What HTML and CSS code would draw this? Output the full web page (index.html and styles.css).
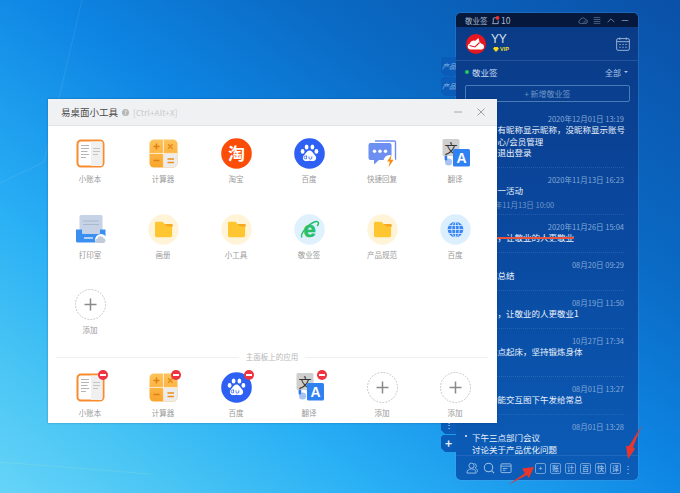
FILE: index.html
```html
<!DOCTYPE html>
<html lang="zh-CN">
<head>
<meta charset="utf-8">
<title>易桌面小工具</title>
<link rel="stylesheet" href="styles.css">
</head>
<body>
<svg class="defs" width="0" height="0" aria-hidden="true">
  <defs>
    <linearGradient id="calcGrad" x1="0" y1="0" x2="0" y2="1"><stop offset="0" stop-color="#fdc35a"/><stop offset="1" stop-color="#f9a52c"/></linearGradient>
    <symbol id="i-book" viewBox="0 0 31 31">
      <rect x="2.500" y="2.500" width="26" height="26" rx="3.500" fill="#fff" stroke="#f78b2d" stroke-width="2"/>
      <path d="M16 3.500h11a.8.8 0 0 1 .5.5v22.500a1.500 1.500 0 0 1-1.500 1.500H16z" fill="#f0f0f0"/>
      <path d="M6 7.500h8M6 10.500h8M6 13.500h6.500M6 16.500h8M6 19.500h5" stroke="#b5b5b5" stroke-width="1"/>
      <path d="M18 10.500h7M18 13.500h7M18 16.500h5" stroke="#c4c4c4" stroke-width="1"/>
    </symbol>
    <symbol id="i-calc" viewBox="0 0 31 31">
      <rect x="1.500" y="1.500" width="28" height="28" rx="4.500" fill="url(#calcGrad)"/>
      <path d="M15.900 15.900h13.600v9.100a4.500 4.500 0 0 1-4.500 4.500h-9.100z" fill="#ececec"/>
      <path d="M15.400 1.500v28M1.500 15.400h28" stroke="#fff" stroke-opacity=".75" stroke-width="1"/>
      <path d="M5.500 8.500h6M8.500 5.500v6M5.500 22.500h6" stroke="#e07f14" stroke-width="1.500"/>
      <path d="M20 6.200l4.600 4.600M24.600 6.200L20 10.800" stroke="#e58a1e" stroke-width="1.400"/>
      <path d="M19.500 21h6.500M19.500 24.500h6.500" stroke="#ec8f1c" stroke-width="1.500"/>
    </symbol>
    <symbol id="i-taobao" viewBox="0 0 31 31">
      <circle cx="15.500" cy="15.500" r="15.300" fill="#fb4d08"/>
      <text x="15.500" y="21.500" class="glyph-tao">淘</text>
    </symbol>
    <symbol id="i-baidu" viewBox="0 0 31 31">
      <circle cx="15.500" cy="15.500" r="15.300" fill="#2d60f3"/>
      <ellipse cx="12.600" cy="9" rx="1.900" ry="2.500" fill="#fff"/>
      <ellipse cx="18.400" cy="9" rx="1.900" ry="2.500" fill="#fff"/>
      <ellipse cx="8.600" cy="13.400" rx="1.900" ry="2.400" fill="#fff"/>
      <ellipse cx="22.400" cy="13.400" rx="1.900" ry="2.400" fill="#fff"/>
      <path d="M15.500 12.600c2.200 0 3 2 4.600 3.600 1.700 1.700 2.300 2.800 2 4.400-.4 2-2.200 2.700-3.800 2.500-1-.1-1.900-.4-2.800-.4s-1.800.3-2.800.4c-1.600.2-3.400-.5-3.800-2.500-.3-1.600.3-2.700 2-4.400 1.600-1.600 2.400-3.600 4.600-3.600z" fill="#fff"/>
      <path d="M12.600 17.600v3.200h-1.100a1.400 1.400 0 1 1 0-2.800h1.100M15 18.400v1.600a1.100 1.100 0 0 0 1.100 1.100h.6a1.100 1.100 0 0 0 1.100-1.100v-1.600" fill="none" stroke="#2d60f3" stroke-width=".8"/>
    </symbol>
    <symbol id="i-reply" viewBox="0 0 31 31">
      <path d="M8 3h19.500a1 1 0 0 1 1 1v18" fill="none" stroke="#6c8ff2" stroke-width="1.400"/>
      <path d="M3.500 5h19a2 2 0 0 1 2 2v13a2 2 0 0 1-2 2H12l-5 4.600V22H3.500a2 2 0 0 1-2-2V7a2 2 0 0 1 2-2z" fill="#6d8ff1"/>
      <circle cx="7.500" cy="13.300" r="1.700" fill="#fff"/><circle cx="13" cy="13.300" r="1.700" fill="#fff"/><circle cx="18.500" cy="13.300" r="1.700" fill="#fff"/>
      <circle cx="22.500" cy="23" r="6" fill="#fff"/>
      <path d="M24.500 17l-4.500 6.600h2.800l-1.200 5.600 5-7.400h-3z" fill="#f68a12"/>
    </symbol>
    <symbol id="i-trans" viewBox="0 0 31 31">
      <rect x="2.500" y="1" width="17" height="17" rx="1.500" fill="#cfcfcf"/>
      <text x="11" y="14.500" class="glyph-wen">文</text>
      <circle cx="8.600" cy="24" r="3.600" fill="#a9c4f2"/>
      <rect x="4.600" y="17.500" width="2.600" height="5" rx="1" fill="#2f7af0"/>
      <rect x="13" y="11" width="17" height="17.500" rx="1.600" fill="#2f80f0"/>
      <text x="21.500" y="25" class="glyph-a">A</text>
    </symbol>
    <symbol id="i-print" viewBox="0 0 31 31">
      <rect x="4.500" y="1" width="23" height="19" rx="1.600" fill="#c6d2e5"/>
      <path d="M8 7h16M8 10.500h16" stroke="#a8b8d0" stroke-width="1"/>
      <path d="M1 15.500h6v3.500a1 1 0 0 0 1 1h16a1 1 0 0 0 1-1v-3.500h5.500V27a1.500 1.500 0 0 1-1.500 1.500H2.500A1.500 1.500 0 0 1 1 27z" fill="#3a8ff1"/>
      <path d="M9 24h9" stroke="#fff" stroke-width="1.200"/>
      <circle cx="26" cy="26" r="6" fill="#fff"/>
      <path d="M22.500 29a2.100 2.100 0 0 1-.2-4.200 3.200 3.200 0 0 1 6.100-.7 2.500 2.500 0 0 1 .2 4.900z" fill="#c1cbda"/>
    </symbol>
    <symbol id="i-folder" viewBox="0 0 31 31">
      <circle cx="15.500" cy="15.500" r="15.200" fill="#fff4d8"/>
      <path d="M7 9a1.200 1.200 0 0 1 1.200-1.200h6.400l2 2.200h6.200a1.300 1.300 0 0 1 1.300 1.300v10.300a1.600 1.600 0 0 1-1.600 1.600H8.600A1.600 1.600 0 0 1 7 21.600z" fill="#ffc632"/>
      <path d="M16.600 10l2.600 2.400h5.600v-1.100a1.300 1.300 0 0 0-1.300-1.300z" fill="#f6a823"/>
    </symbol>
    <symbol id="i-ie" viewBox="0 0 31 31">
      <circle cx="15.500" cy="15.500" r="15.200" fill="#dff1fc"/>
      <text x="15.500" y="22.500" class="glyph-e">e</text>
      <path d="M8 23.500c-1.500-1.500.5-5.500 4.500-10 4.500-4.500 9.500-7 11.500-5.500 1 1 .3 2.700-.8 4.200" fill="none" stroke="#27c06a" stroke-width="1.400"/>
    </symbol>
    <symbol id="i-globe" viewBox="0 0 31 31">
      <circle cx="15.500" cy="15.500" r="15.200" fill="#dcefff"/>
      <circle cx="15.500" cy="15.500" r="7.800" fill="#3a86f4"/>
      <path d="M7.700 15.500h15.600M9 11.500h13M9 19.500h13M15.500 7.700v15.600" stroke="#dcefff" stroke-width=".8"/>
      <ellipse cx="15.500" cy="15.500" rx="3.800" ry="7.800" fill="none" stroke="#dcefff" stroke-width=".8"/>
    </symbol>
    <symbol id="i-add" viewBox="0 0 31 31">
      <circle cx="15.500" cy="15.500" r="15" fill="#fff" stroke="#b5b5b5" stroke-width=".8" stroke-dasharray="1.800 1.300"/>
      <path d="M9.500 15.500h12M15.500 9.500v12" stroke="#8a8a8a" stroke-width="1.500"/>
    </symbol>
  </defs>
</svg>

<main class="desktop">
  <svg class="streaks" viewBox="0 0 680 493" aria-hidden="true">
    <path d="M0 183 L44 162 L82 0" fill="none" stroke="#fff" stroke-opacity=".09" stroke-width="1"/>
    <path d="M0 462 L150 474" fill="none" stroke="#d8f6b0" stroke-opacity=".14" stroke-width="1"/>
  </svg>

  <section class="widget">
    <div class="tabs">
      <div class="tab-group">
        <div class="tab tab--text">产品</div>
        <div class="tab tab--text">产品</div>
      </div>
      <div class="tab-group">
        <div class="tab tab--short">⋮</div>
        <div class="tab tab--add">+</div>
      </div>
    </div>

    <div class="panel">
      <header class="panel-title">
        <span class="panel-name">敬业签</span>
        <svg class="bell" viewBox="0 0 10 10" aria-hidden="true">
          <path d="M5.500 2H3.500a1 1 0 0 0-1 1V7l-1 1.500h6.500V5" fill="none" stroke="#b8c4d8" stroke-width=".9"/>
          <circle cx="7.300" cy="2.200" r="2.100" fill="#f0312c"/>
        </svg>
        <span class="panel-count">10</span>
        <span class="spacer"></span>
        <svg class="tool" viewBox="0 0 12 10" aria-hidden="true"><path d="M3 8.500a2 2 0 0 1-.2-4 3.300 3.300 0 0 1 6.300-.6 2.300 2.300 0 0 1 0 4.600z" fill="none" stroke="#5d7394"/><circle cx="8.500" cy="7" r="1.500" fill="#0a2148" stroke="#5d7394" stroke-width=".7"/></svg>
        <svg class="tool" viewBox="0 0 12 10" aria-hidden="true"><path d="M2 1.500h8M2 3.800h8M2 6.200h8M2 8.500h8" stroke="#5d7394" stroke-width=".9"/></svg>
        <svg class="tool" viewBox="0 0 12 10" aria-hidden="true"><path d="M2 7l4-4 4 4" fill="none" stroke="#8193ad"/></svg>
        <svg class="tool" viewBox="0 0 12 10" aria-hidden="true"><path d="M2 5h8" stroke="#8193ad"/></svg>
      </header>

      <div class="panel-user">
        <div class="avatar">
          <svg viewBox="0 0 20 20" aria-hidden="true">
            <path d="M4.500 15.500a3 3 0 0 1-.6-5.900 4 4 0 0 1 5.400-2.800L12.500 4l1 4 2 1.700a3 3 0 0 1 .5 5.800z" fill="#fff"/>
            <path d="M3.500 11.500l5.500 1.500 4.500-4.500" fill="none" stroke="#e8161e" stroke-width="1.100"/>
          </svg>
        </div>
        <div class="user-info">
          <div class="user-name">YY</div>
          <div class="user-vip">
            <svg class="vip-gem" viewBox="0 0 7 6" aria-hidden="true"><path d="M1.500 0h4L7 2 3.500 6 0 2z" fill="#f8d71c"/></svg>
            <span>VIP</span>
          </div>
        </div>
        <svg class="calendar" viewBox="0 0 15 15" aria-hidden="true">
          <rect x=".7" y="1.700" width="13.600" height="12.600" rx="1.500" fill="none" stroke="#9fb6d4"/>
          <path d="M.7 5h13.600M4 .5v2.500M11 .5v2.500" stroke="#9fb6d4"/>
          <path d="M3.500 8h1.500M6.800 8h1.500M10 8h1.500M3.500 11h1.500M6.800 11h1.500M10 11h1.500" stroke="#9fb6d4"/>
        </svg>
      </div>

      <div class="panel-filter">
        <span class="dot"></span>
        <span class="filter-name">敬业签</span>
        <span class="spacer"></span>
        <span class="filter-all">全部</span>
        <span class="caret"></span>
      </div>

      <button class="new-note">+ 新增敬业签</button>

      <div class="notes">
        <article class="note note--a">
          <time class="note-date">2020年12月01日 13:19</time>
          <div class="note-body"><span class="bullet"></span><p>用户名有昵称显示昵称，没昵称显示账号<br>个人中心/会员管理<br>设置中退出登录</p></div>
        </article>
        <article class="note note--b">
          <time class="note-date">2020年11月13日 16:23</time>
          <div class="note-body"><span class="bullet"></span><p>参加周一活动</p></div>
          <div class="note-remind">2020年11月13日 10:00</div>
        </article>
        <article class="note">
          <time class="note-date">2020年11月26日 15:04</time>
          <div class="note-body"><span class="bullet"></span><p class="done">易桌面，让敬业的人更敬业</p></div>
        </article>
        <article class="note">
          <time class="note-date">08月20日 09:29</time>
          <div class="note-body"><span class="bullet"></span><p>周工作总结</p></div>
        </article>
        <article class="note">
          <time class="note-date">08月19日 11:50</time>
          <div class="note-body"><span class="bullet"></span><p>敬业签，让敬业的人更敬业1</p></div>
        </article>
        <article class="note note--c">
          <time class="note-date">10月27日 17:34</time>
          <div class="note-body"><span class="bullet"></span><p>每天七点起床，坚持锻炼身体</p></div>
        </article>
        <article class="note">
          <time class="note-date">08月01日 13:27</time>
          <div class="note-body"><span class="bullet"></span><p>产品功能交互图下午发给常总</p></div>
        </article>
        <article class="note note--last">
          <time class="note-date">08月01日 13:28</time>
          <div class="note-body"><span class="bullet"></span><p>下午三点部门会议<br>讨论关于产品优化问题</p></div>
        </article>
      </div>

      <footer class="panel-bar">
        <svg class="bar-icon" viewBox="0 0 13 13" aria-hidden="true"><circle cx="6" cy="4" r="2.800" fill="none" stroke="#9fc0e6"/><path d="M1 12c0-3 2-4.500 5-4.500s5 1.500 5 4.500zM9 1.500a2.800 2.800 0 0 1 1 5c1.500.6 2.500 2 2.500 4" fill="none" stroke="#9fc0e6"/></svg>
        <svg class="bar-icon" viewBox="0 0 13 13" aria-hidden="true"><circle cx="6" cy="6" r="4.600" fill="none" stroke="#9fc0e6" stroke-width="1.100"/><path d="M9.500 9.500l2.500 2.500" stroke="#9fc0e6" stroke-width="1.100"/></svg>
        <svg class="bar-icon" viewBox="0 0 13 13" aria-hidden="true"><rect x="1" y="2" width="11" height="9.500" rx="1" fill="none" stroke="#9fc0e6"/><path d="M1 4.500h11M3 7h5M3 9h3" stroke="#9fc0e6" stroke-width=".9"/></svg>
        <span class="spacer"></span>
        <span class="bar-btn">+</span>
        <span class="bar-btn">账</span>
        <span class="bar-btn">计</span>
        <span class="bar-btn">百</span>
        <span class="bar-btn">快</span>
        <span class="bar-btn">译</span>
        <span class="bar-more">⋮</span>
      </footer>
    </div>
  </section>

  <section class="dialog">
    <header class="dialog-head">
      <h1 class="dialog-title">易桌面小工具</h1>
      <span class="help">?</span>
      <span class="hotkey">[Ctrl+Alt+X]</span>
      <span class="spacer"></span>
      <svg class="win-btn" viewBox="0 0 10 10" aria-hidden="true"><path d="M1 5h8" stroke="#a8a8a8"/></svg>
      <svg class="win-btn" viewBox="0 0 10 10" aria-hidden="true"><path d="M1.500 1.500l7 7M8.500 1.500l-7 7" stroke="#a0a0a0"/></svg>
    </header>

    <div class="tools">
      <div class="tool-item"><svg class="tool-icon"><use href="#i-book"/></svg><span class="tool-label">小账本</span></div>
      <div class="tool-item"><svg class="tool-icon"><use href="#i-calc"/></svg><span class="tool-label">计算器</span></div>
      <div class="tool-item"><svg class="tool-icon"><use href="#i-taobao"/></svg><span class="tool-label">淘宝</span></div>
      <div class="tool-item"><svg class="tool-icon"><use href="#i-baidu"/></svg><span class="tool-label">百度</span></div>
      <div class="tool-item"><svg class="tool-icon"><use href="#i-reply"/></svg><span class="tool-label">快捷回复</span></div>
      <div class="tool-item"><svg class="tool-icon"><use href="#i-trans"/></svg><span class="tool-label">翻译</span></div>
      <div class="tool-item"><svg class="tool-icon"><use href="#i-print"/></svg><span class="tool-label">打印室</span></div>
      <div class="tool-item"><svg class="tool-icon"><use href="#i-folder"/></svg><span class="tool-label">画册</span></div>
      <div class="tool-item"><svg class="tool-icon"><use href="#i-folder"/></svg><span class="tool-label">小工具</span></div>
      <div class="tool-item"><svg class="tool-icon"><use href="#i-ie"/></svg><span class="tool-label">敬业签</span></div>
      <div class="tool-item"><svg class="tool-icon"><use href="#i-folder"/></svg><span class="tool-label">产品规范</span></div>
      <div class="tool-item"><svg class="tool-icon"><use href="#i-globe"/></svg><span class="tool-label">百度</span></div>
      <div class="tool-item"><svg class="tool-icon"><use href="#i-add"/></svg><span class="tool-label">添加</span></div>
    </div>

    <div class="divider"><span>主面板上的应用</span></div>

    <div class="tools tools--main">
      <div class="tool-item"><div class="icon-wrap"><svg class="tool-icon"><use href="#i-book"/></svg><span class="remove"></span></div><span class="tool-label">小账本</span></div>
      <div class="tool-item"><div class="icon-wrap"><svg class="tool-icon"><use href="#i-calc"/></svg><span class="remove"></span></div><span class="tool-label">计算器</span></div>
      <div class="tool-item"><div class="icon-wrap"><svg class="tool-icon"><use href="#i-baidu"/></svg><span class="remove"></span></div><span class="tool-label">百度</span></div>
      <div class="tool-item"><div class="icon-wrap"><svg class="tool-icon"><use href="#i-trans"/></svg><span class="remove"></span></div><span class="tool-label">翻译</span></div>
      <div class="tool-item"><svg class="tool-icon"><use href="#i-add"/></svg><span class="tool-label">添加</span></div>
      <div class="tool-item"><svg class="tool-icon"><use href="#i-add"/></svg><span class="tool-label">添加</span></div>
    </div>
  </section>

  <svg class="arrows" viewBox="0 0 680 493" aria-hidden="true">
    <polygon points="508,485 525,473 522,468.500 534,467 529,478 527,475" fill="#e8362c"/>
    <polygon points="642,425 633,447 635,449 628,459 626,446 629,446" fill="#e8362c"/>
  </svg>
</main>
</body>
</html>
```

FILE: styles.css
```css
* { box-sizing: border-box; margin: 0; padding: 0; }
html, body { width: 680px; height: 493px; overflow: hidden; }
body { font-family: "Noto Sans CJK SC", "Liberation Sans", sans-serif; }
.defs { position: absolute; }
.spacer { flex: 1; }

.desktop {
  position: relative;
  width: 680px;
  height: 493px;
  overflow: hidden;
  background: linear-gradient(217deg, #0a50a8 0%, #0a6ac4 28%, #0e86e4 48%, #2ab0f5 72%, #48c4f4 86%, #66d4f8 100%);
}
.streaks, .arrows { position: absolute; inset: 0; width: 680px; height: 493px; pointer-events: none; }

/* 敬业签 widget */
.widget {
  position: absolute;
  left: 441px;
  top: 13px;
  display: flex;
  height: 467px;
}
.tabs {
  width: 15px;
  padding: 44px 0 28px;
  display: flex;
  flex-direction: column;
  justify-content: space-between;
}
.tab-group { display: flex; flex-direction: column; gap: 1px; }
.tab {
  width: 15px;
  height: 19px;
  overflow: hidden;
  clip-path: polygon(2px 0, 100% 0, 100% 100%, 4px 100%, 0 calc(100% - 4px), 0 2px);
  background: #0b5cb8;
  color: #e6f0fb;
  font-size: 8px;
  line-height: 18px;
  text-align: center;
}
.tab--text { color: #8fb6e2; font-style: italic; white-space: nowrap; text-align: left; padding-left: 1px; font-size: 7px; }
.tab--short { height: 18px; }
.tab--add { height: 17px; font-size: 12px; line-height: 15px; font-weight: 700; }

.panel {
  width: 182px;
  height: 467px;
  display: flex;
  flex-direction: column;
  border-radius: 5px;
  overflow: hidden;
  background: linear-gradient(#0a3a84, #0a459a 35%, #0a50a8 70%, #0b5db8);
  box-shadow: 0 0 0 1px rgba(120, 170, 230, .18);
}
.panel-title {
  height: 14px;
  flex: none;
  display: flex;
  align-items: center;
  padding: 0 8px 0 9px;
  background: #06183c;
  color: #a9b8cd;
  font-size: 7.500px;
}
.panel-name { width: 26px; }
.bell { width: 9px; height: 9px; margin-right: 1px; }
.panel-count { font-size: 8.500px; }
.tool { width: 10px; height: 9px; margin-left: 4px; }

.panel-user {
  height: 34px;
  flex: none;
  display: flex;
  align-items: center;
  padding: 0 8px 0 10px;
  border-bottom: 1px solid rgba(130, 175, 230, .2);
}
.avatar { width: 20px; height: 20px; border-radius: 50%; background: #e8161e; flex: none; }
.avatar svg { display: block; width: 20px; height: 20px; }
.user-info { margin-left: 5px; flex: 1; display: flex; flex-direction: column; gap: 1px; }
.user-name { color: #d5e2f2; font: 400 12px/10px "Liberation Sans", sans-serif; letter-spacing: -.2px; }
.user-vip { display: flex; align-items: center; gap: 1px; padding-left: 2px; color: #f5dc2a; font: 700 5.500px/8px "Liberation Sans", sans-serif; }
.vip-gem { width: 6px; height: 5px; }
.calendar { width: 14px; height: 14px; flex: none; }

.panel-filter {
  height: 22px;
  flex: none;
  display: flex;
  align-items: center;
  padding: 0 10px 0 9px;
  color: #b6cfee;
  font-size: 8.500px;
}
.dot { width: 4px; height: 4px; border-radius: 50%; background: #1ecb63; margin-right: 3px; }
.filter-name { color: #c8dcf4; }
.filter-all { font-size: 8px; color: #a8c4e6; }
.caret { border: 2px solid transparent; border-top: 2.500px solid #a8c4e6; border-bottom: 0; margin-left: 3px; }

.new-note {
  flex: none;
  margin: 2px 8px 0 9px;
  height: 17px;
  border: 1px solid rgba(170, 205, 245, .42);
  border-radius: 2px;
  background: transparent;
  color: #6d94c6;
  font: 8px "Noto Sans CJK SC", sans-serif;
}

.notes { flex: 1; min-height: 0; overflow: hidden; padding: 11px 14px 0 9px; }
.note { padding-bottom: 8px; margin-bottom: 6.500px; border-bottom: 1px dotted rgba(150, 190, 240, .18); }
.note--a { padding-bottom: 8px; }
.note--b { padding-bottom: 4px; margin-bottom: 6px; }
.note--c { padding-bottom: 18px; }
.note--last { border-bottom: 0; margin-bottom: 0; padding-bottom: 0; }
.note-date { display: block; text-align: right; color: #84a9d8; font-size: 7.500px; line-height: 11px; }
.note-body { display: flex; gap: 5px; }
.note-body p { color: #eaf2fc; font-size: 8.500px; line-height: 11.500px; white-space: nowrap; }
.note-body p.done { text-decoration: line-through; text-decoration-color: #e5533c; text-decoration-thickness: 1.500px; }
.bullet { width: 2px; height: 2px; margin-top: 3px; background: #eaf2fc; border-radius: 50%; flex: none; }
.note-remind { margin-top: 2.500px; padding-left: 13px; color: #6f97ca; font-size: 7.500px; line-height: 11px; }

.panel-bar {
  height: 25px;
  flex: none;
  display: flex;
  align-items: center;
  padding: 0 7px 0 10px;
  border-top: 1px solid rgba(130, 175, 230, .16);
}
.bar-icon { width: 12px; height: 12px; margin-right: 5px; }
.bar-btn {
  width: 11px;
  height: 11px;
  margin-left: 4px;
  border: 1px solid #6f9ed6;
  border-radius: 2px;
  color: #b9d2f0;
  font-size: 7px;
  line-height: 9px;
  text-align: center;
}
.bar-more { width: 8px; margin-left: 2px; color: #a8c6ea; font-size: 10px; line-height: 11px; text-align: center; }

/* Tools dialog */
.dialog {
  position: absolute;
  left: 48px;
  top: 99px;
  width: 449px;
  height: 324px;
  background: #fff;
  box-shadow: 0 0 2px rgba(0, 30, 70, .35);
}
.dialog-head {
  height: 27px;
  display: flex;
  align-items: center;
  padding: 0 11px 0 13px;
  background: #f0f1f3;
  border-bottom: 1px solid #e3e4e6;
}
.dialog-title { font-size: 9.500px; font-weight: 400; color: #4a4a4a; }
.help { width: 7px; height: 7px; margin: 0 4px 0 4px; border-radius: 50%; background: #b5b5b5; color: #fff; font-size: 6px; line-height: 7px; text-align: center; }
.hotkey { font-size: 8px; color: #c8c8c8; letter-spacing: .2px; }
.win-btn { width: 10px; height: 10px; margin-left: 13px; }

.tools {
  display: grid;
  grid-template-columns: repeat(6, 73px);
  justify-content: center;
  row-gap: 28.500px;
  padding-top: 12px;
}
.tools--main { padding-top: 10px; }
.tool-item { display: flex; flex-direction: column; align-items: center; }
.icon-wrap { position: relative; width: 31px; height: 31px; }
.tool-icon { display: block; width: 31px; height: 31px; }
.tool-label { margin-top: 4px; color: #9a9a9a; font-size: 7.500px; line-height: 12px; white-space: nowrap; }
.remove {
  position: absolute;
  top: -2px;
  right: -2px;
  width: 10px;
  height: 10px;
  border-radius: 50%;
  background: #ef3340;
}
.remove::after {
  content: "";
  position: absolute;
  left: 2px;
  top: 4px;
  width: 6px;
  height: 2px;
  background: #fff;
}
.glyph-tao { font: 700 17px "Noto Sans CJK SC", sans-serif; fill: #fff; text-anchor: middle; }
.glyph-wen { font: 400 13px "Noto Sans CJK SC", sans-serif; fill: #333; text-anchor: middle; }
.glyph-a { font: 700 14px "Liberation Sans", sans-serif; fill: #fff; text-anchor: middle; }
.glyph-e { font: 700 22px "Liberation Sans", sans-serif; fill: #27c06a; stroke: #27c06a; stroke-width: .6px; text-anchor: middle; }

.divider {
  display: flex;
  align-items: center;
  gap: 7px;
  margin: 16px 9px 0 8px;
  color: #b8b8b8;
  font-size: 7.500px;
  line-height: 10px;
}
.divider::before, .divider::after { content: ""; flex: 1; height: 1px; background: #f0f0f0; }
```
